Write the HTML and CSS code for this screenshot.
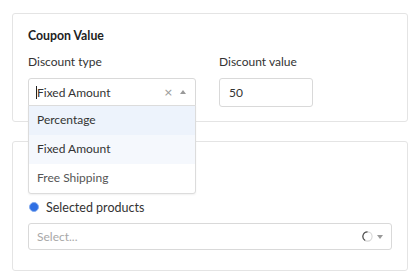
FILE: index.html
```html
<!DOCTYPE html>
<html>
<head>
<meta charset="utf-8">
<link rel="stylesheet" href="styles.css">
</head>
<body>
<div class="page">
  <section class="card card-value">
    <h3 class="title">Coupon Value</h3>
    <div class="fields">
      <div class="field field-type">
        <label class="label">Discount type</label>
        <div class="select open">
          <span class="cursor"></span>
          <span class="value">Fixed Amount</span>
          <span class="clear">×</span>
          <span class="caret-up"></span>
          <ul class="menu">
            <li class="opt hover">Percentage</li>
            <li class="opt selected">Fixed Amount</li>
            <li class="opt muted">Free Shipping</li>
          </ul>
        </div>
      </div>
      <div class="field field-amount">
        <label class="label">Discount value</label>
        <div class="input">50</div>
      </div>
    </div>
  </section>
  <section class="card card-applies">
    <div class="radio-row"><span class="radio checked"></span><span>Selected products</span></div>
    <div class="select select-products">
      <span class="placeholder">Select...</span>
      <svg class="spinner" width="11" height="11" viewBox="0 0 11 11">
        <circle cx="5.5" cy="5.5" r="4.6" fill="none" stroke="#d6d6d6" stroke-width="1.1"/>
        <path d="M5.5 0.9 A4.6 4.6 0 0 0 3.2 9.5" fill="none" stroke="#555" stroke-width="1.2"/>
      </svg>
      <span class="caret-down"></span>
    </div>
  </section>
</div>
</body>
</html>
```
FILE: styles.css
```css
* { box-sizing: border-box; }
html, body { margin: 0; padding: 0; background: #fff; }
body {
  font-family: Lato, "Open Sans", sans-serif;
  font-size: 12px;
  color: #333;
}
.page {
  padding: 13px 12px 0 12px;
  width: 420px;
  display: flex;
  flex-direction: column;
  gap: 19px;
}
.card {
  border: 1px solid #e4e4e4;
  border-radius: 3px;
  padding: 14px 15px 14px 15px;
  display: flex;
  flex-direction: column;
}
.title {
  margin: 0;
  font-size: 12.3px;
  font-weight: 700;
  line-height: 16px;
  color: #222;
}
.fields {
  display: flex;
  gap: 23px;
  margin-top: 10px;
}
.field { display: flex; flex-direction: column; }
.label {
  line-height: 16px;
  margin-bottom: 8px;
  color: #333;
}
.field-type { width: 168px; }
.field-amount { width: 94px; }
.select {
  position: relative;
  height: 28px;
  border: 1px solid #d9d9d9;
  border-radius: 3px;
  display: flex;
  align-items: center;
  padding: 0 9px 0 7px;
  background: #fff;
}
.select.open { border-radius: 3px 3px 0 0; }
.cursor {
  width: 1px;
  height: 13px;
  background: #222;
}
.value { flex: 1; color: #333; }
.clear {
  color: #9a9a9a;
  line-height: 1;
  margin-right: 7px;
  font-family: "DejaVu Sans", sans-serif;
  font-size: 11px;
}
.caret-up {
  width: 0; height: 0;
  border-left: 3px solid transparent;
  border-right: 3px solid transparent;
  border-bottom: 4px solid #999;
}
.caret-down {
  width: 0; height: 0;
  border-left: 3.5px solid transparent;
  border-right: 3.5px solid transparent;
  border-top: 4px solid #999;
  margin-left: 4px;
}
.menu {
  position: absolute;
  left: -1px;
  right: -1px;
  top: 26px;
  margin: 0;
  padding: 0;
  list-style: none;
  background: #fff;
  border: 1px solid #dcdcdc;
  border-radius: 0 0 3px 3px;
  box-shadow: 0 1px 2px rgba(0,0,0,0.06);
  z-index: 5;
}
.opt {
  height: 29px;
  line-height: 28px;
  padding-left: 8px;
  color: #333;
}
.opt.hover { background: #edf3fc; }
.opt.selected { background: #f5f8fd; }
.opt.muted { color: #555; }
.input {
  height: 29px;
  border: 1px solid #d9d9d9;
  border-radius: 3px;
  display: flex;
  align-items: center;
  padding-left: 9px;
  color: #333;
}
.card-applies { padding-top: 57px; padding-bottom: 20px; }
.radio-row {
  display: flex;
  align-items: center;
  gap: 7px;
  height: 16px;
  margin-bottom: 6px;
  padding-left: 1px;
  font-size: 12.5px;
  color: #333;
}
.radio {
  width: 10px;
  height: 10px;
  border-radius: 50%;
  border: 1px solid #bbb;
  background: #fff;
}
.radio.checked {
  background: #2f6fe3;
  border: 1.5px solid #86adef;
}
.select-products {
  margin-top: 2px;
  height: 27px;
  padding-right: 8px;
}
.placeholder { flex: 1; color: #a8a8a8; padding-left: 1px; }
.spinner { display: block; }
```
